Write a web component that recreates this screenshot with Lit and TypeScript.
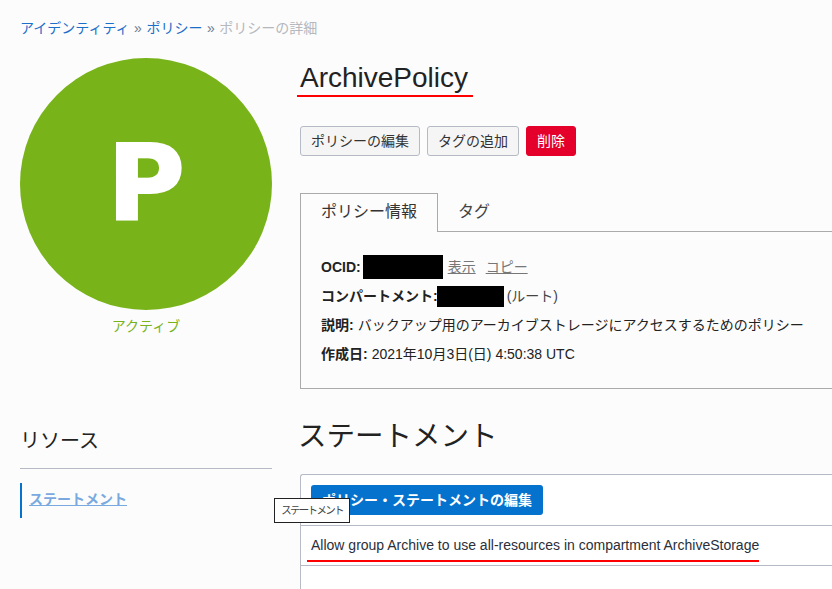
import { LitElement, html, css } from "lit";
import { customElement } from "lit/decorators.js";

@customElement("app-root")
export class AppRoot extends LitElement {
  static styles = css`
    :host {
      display: block;
      width: 832px;
      height: 589px;
      overflow: hidden;
      background: #fcfcfc;
      color: #222;
      font-family: "Liberation Sans", "Noto Sans CJK JP", sans-serif;
      font-size: 14px;
      position: relative;
    }
    a { text-decoration: none; }
    .crumbs {
      height: 20px;
      line-height: 20px;
      padding: 18px 0 0 20px;
      color: #6b7a90;
      white-space: nowrap;
      word-spacing: 0.6px;
    }
    .crumbs a { color: #1c6fc9; }
    .crumbs .cur { color: #b5b8bd; }
    .top {
      display: grid;
      grid-template-columns: 252px 1fr;
      column-gap: 28px;
      padding: 20px 0 0 20px;
    }
    .side { display: flex; flex-direction: column; align-items: center; }
    .circle {
      width: 252px;
      height: 252px;
      border-radius: 50%;
      background: #78b31a;
      color: #fff;
      display: flex;
      align-items: center;
      justify-content: center;
      font-family: "DejaVu Sans", sans-serif;
      font-weight: 700;
      font-size: 106px;
      line-height: 1;
      -webkit-text-stroke: 2px #fff;
    }
    .state { margin-top: 6px; color: #78b31a; line-height: 20px; }
    .main { min-width: 0; margin-right: -20px; }
    .title-wrap { height: 68px; }
    h1 {
      display: inline-block;
      position: relative;
      margin: 0;
      font-weight: 400;
      font-size: 28px;
      line-height: 40px;
      color: #222;
    }
    .red {
      position: absolute;
      background: #f00;
      height: 2px;
    }
    h1 .red { left: -3px; right: -5px; bottom: 1px; }
    .btns { display: flex; gap: 7px; }
    .btn {
      box-sizing: border-box;
      height: 30px;
      line-height: 28px;
      padding: 0 10px;
      border: 1px solid #b6bac4;
      border-radius: 3px;
      background: #f5f5f6;
      color: #333;
      white-space: nowrap;
    }
    .btn.del { background: #e4002b; border-color: #e4002b; color: #fff; }
    .tabs { display: flex; margin-top: 37px; height: 39px; }
    .tab {
      box-sizing: border-box;
      padding: 0 20px;
      font-size: 16px;
      line-height: 38px;
      color: #444;
      border-bottom: 1px solid #aaa;
    }
    .tab.on {
      width: 138px;
      border: 1px solid #aaa;
      border-bottom: none;
      line-height: 36px;
      color: #333;
    }
    .tab.rest { flex: 1; padding: 0; }
    .panel {
      box-sizing: border-box;
      height: 158px;
      margin-top: -1px;
      padding: 26px 20px 0;
      border: 1px solid #aaa;
      border-top: none;
      font-size: 14px;
      display: flex;
      flex-direction: column;
      gap: 9px;
    }
    .row { height: 20px; line-height: 20px; white-space: nowrap; display: flex; align-items: center; }
    .row b { color: #222; }
    .mask { display: inline-block; background: #000; }
    .m1 { width: 80px; height: 24px; margin: 0 5px 0 2px; }
    .m2 { width: 67px; height: 21px; margin: 0 3px 0 -1px; }
    .muted { color: #444; }
    .lnk { color: #777; text-decoration: underline; margin-right: 10px; }
    .row.sp b { margin-right: 4px; }
    .bottom {
      display: grid;
      grid-template-columns: 252px 1fr;
      column-gap: 28px;
      padding: 20px 0 0 20px;
    }
    .res-title {
      height: 60px;
      box-sizing: border-box;
      padding-top: 17px;
      font-size: 20px;
      line-height: 30px;
      color: #222;
      border-bottom: 1px solid #b6bac4;
    }
    .res-nav {
      margin-top: 14px;
      height: 35px;
      border-left: 2px solid #0572ce;
      padding-left: 7px;
      line-height: 33px;
    }
    .res-nav a { color: #7aa9e0; text-decoration: underline; font-weight: 700; font-size: 14px; }
    .stmt { min-width: 0; margin-right: -20px; }
    h2 {
      margin: 0 0 0 -2px;
      height: 65px;
      font-weight: 400;
      font-size: 28.5px;
      line-height: 54px;
      color: #222;
    }
    .table {
      border: 1px solid #b6bac4;
      border-right: none;
      border-bottom: none;
      border-top-left-radius: 3px;
      background: #fff;
      height: 200px;
    }
    .tb { height: 51px; box-sizing: border-box; padding: 10px 10px 0; border-bottom: 1px solid #b6bac4; }
    .primary {
      display: inline-block;
      height: 30px;
      line-height: 30px;
      padding: 0 11px;
      background: #0572ce;
      color: #fff;
      border-radius: 3px;
      font-weight: 700;
      white-space: nowrap;
    }
    .line {
      height: 40px;
      box-sizing: border-box;
      padding-left: 10px;
      line-height: 38px;
      border-bottom: 1px solid #b6bac4;
      position: relative;
      color: #2a2f3a;
      white-space: nowrap;
    }
    .line span { position: relative; display: inline-block; }
    .line span .red { left: -4px; right: 0; bottom: 2px; }
    .tooltip {
      position: absolute;
      left: 274px;
      top: 498px;
      box-sizing: border-box;
      width: 76px;
      height: 25px;
      border: 1px solid #222;
      background: #fff;
      color: #444;
      font-size: 10.5px;
      letter-spacing: -1.7px;
      line-height: 23px;
      text-align: center;
      white-space: nowrap;
    }
  `;

  render() {
    return html`
      <div class="crumbs">
        <a>アイデンティティ</a> » <a>ポリシー</a> » <span class="cur">ポリシーの詳細</span>
      </div>
      <div class="top">
        <div class="side">
          <div class="circle">P</div>
          <div class="state">アクティブ</div>
        </div>
        <div class="main">
          <div class="title-wrap"><h1>ArchivePolicy<i class="red"></i></h1></div>
          <div class="btns">
            <a class="btn">ポリシーの編集</a>
            <a class="btn">タグの追加</a>
            <a class="btn del">削除</a>
          </div>
          <div class="tabs">
            <div class="tab on">ポリシー情報</div>
            <div class="tab">タグ</div>
            <div class="tab rest"></div>
          </div>
          <div class="panel">
            <div class="row"><b>OCID:</b><i class="mask m1"></i><a class="lnk">表示</a><a class="lnk">コピー</a></div>
            <div class="row"><b>コンパートメント:</b><i class="mask m2"></i><span class="muted">(ルート)</span></div>
            <div class="row sp"><b>説明:</b><span>バックアップ用のアーカイブストレージにアクセスするためのポリシー</span></div>
            <div class="row sp"><b>作成日:</b><span>2021年10月3日(日) 4:50:38 UTC</span></div>
          </div>
        </div>
      </div>
      <div class="bottom">
        <div>
          <div class="res-title">リソース</div>
          <div class="res-nav"><a>ステートメント</a></div>
        </div>
        <div class="stmt">
          <h2>ステートメント</h2>
          <div class="table">
            <div class="tb"><a class="primary">ポリシー・ステートメントの編集</a></div>
            <div class="line"><span>Allow group Archive to use all-resources in compartment ArchiveStorage<i class="red"></i></span></div>
          </div>
        </div>
      </div>
      <div class="tooltip">ステートメント</div>
    `;
  }
}
